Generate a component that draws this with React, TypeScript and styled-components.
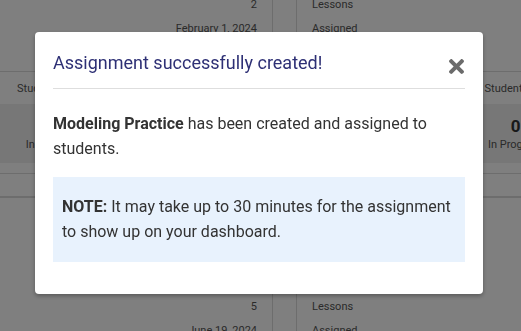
import * as React from "react"
import styled, { createGlobalStyle } from "styled-components"

const GlobalStyle = createGlobalStyle`
  html, body {
    margin: 0;
    padding: 0;
    overflow: hidden;
    background: #fff;
  }
  body {
    font-family: Roboto, "Noto Sans", "Liberation Sans", sans-serif;
  }
`

// ---- background board ----

const Board = styled.div`
  display: flex;
  flex-direction: column;
  width: 571px;
  margin: -9px 0 0 -1px;
`

const Card = styled.div`
  display: flex;
  flex-direction: column;
  background: #fff;
  border: 1px solid #dadada;
  border-bottom: none;
`

const DetailGrid = styled.div<{ $bottom?: number }>`
  display: grid;
  grid-template-columns: 273px 23px 1fr;
  padding-bottom: ${(p) => p.$bottom ?? 0}px;
`

const DetailValue = styled.div`
  display: flex;
  align-items: center;
  justify-content: flex-end;
  height: 24px;
  padding-right: 15px;
  border-right: 1px solid #dadada;
  font-size: 11px;
  color: #555;
`

const DetailGap = styled.div``

const DetailLabel = styled.div`
  display: flex;
  align-items: center;
  height: 24px;
  padding-left: 15px;
  border-left: 1px solid #dadada;
  font-size: 11px;
  color: #555;
`

const StudentHeader = styled.div`
  display: flex;
  justify-content: space-between;
  align-items: center;
  height: 32px;
  padding: 0 20px 0 17px;
  border-top: 1px solid #dadada;
  font-size: 11px;
  color: #555;
`

const StatBand = styled.div`
  display: grid;
  grid-template-columns: repeat(6, 1fr);
  height: 59px;
  padding: 11px 7px 0;
  box-sizing: border-box;
  background: #eeeeee;
`

const Stat = styled.div`
  display: flex;
  flex-direction: column;
  align-items: center;
`

const StatValue = styled.span`
  font-size: 17px;
  line-height: 22px;
  font-weight: 700;
  color: #333;
`

const StatLabel = styled.span`
  margin-top: 1px;
  font-size: 11px;
  line-height: 14px;
  color: #555;
  white-space: nowrap;
`

const Spacer = styled.div`
  height: 10px;
`

const CardFooter = styled.div`
  display: flex;
  align-items: center;
  justify-content: center;
  height: 22px;
  border-top: 1px solid #dadada;
  border-bottom: 1px solid #dadada;
  font-size: 11px;
  color: #3f51b5;
`

const CardHeading = styled.div`
  display: flex;
  align-items: center;
  justify-content: center;
  height: 96px;
  font-size: 14px;
  color: #333;
`

// ---- modal ----

const Overlay = styled.div`
  position: fixed;
  inset: 0;
  display: flex;
  justify-content: center;
  align-items: flex-start;
  padding: 32px 3px 0 0;
  box-sizing: border-box;
  background: rgba(0, 0, 0, 0.5);
`

const Modal = styled.div`
  width: 448px;
  padding: 0 18px 32px;
  box-sizing: border-box;
  background: #fff;
  border-radius: 4px;
  box-shadow: 0 2px 4px rgba(0, 0, 0, 0.3);
`

const ModalHeader = styled.div`
  display: flex;
  justify-content: space-between;
  align-items: center;
  padding: 20px 0 14px;
  border-bottom: 1px solid #dedede;
`

const ModalTitle = styled.h2`
  margin: 0;
  font-size: 18px;
  line-height: 22px;
  font-weight: 400;
  color: #2e3075;
`

const CloseButton = styled.button`
  display: flex;
  width: 15px;
  height: 15px;
  margin: 6px 1px 0 0;
  padding: 0;
  border: 0;
  background: none;
  color: #6b6b6b;
  cursor: pointer;
`

const Message = styled.p`
  margin: 22px 0 16px;
  font-size: 16px;
  line-height: 25px;
  color: #333;
`

const Note = styled.div`
  padding: 17px 9px 18px;
  background: #e8f2fd;
  font-size: 16px;
  line-height: 25px;
  color: #333;
`

const stats = ["Incomplete", "Not Started", "Submitted", "Graded", "Completed", "In Progress"]

type Detail = [string, string]

const AssignmentCard: React.FunctionComponent<{ heading?: string; details: Detail[]; full?: boolean }> = ({
  heading,
  details,
  full,
}) => {
  return (
    <Card>
      {heading && <CardHeading>{heading}</CardHeading>}
      <DetailGrid $bottom={full ? 7 : 0}>
        {details.map(([value, label]) => (
          <React.Fragment key={label}>
            <DetailValue>{value}</DetailValue>
            <DetailGap />
            <DetailLabel>{label}</DetailLabel>
          </React.Fragment>
        ))}
      </DetailGrid>
      {full && (
        <>
          <StudentHeader>
            <span>Students</span>
            <span>Student View</span>
          </StudentHeader>
          <StatBand>
            {stats.map((s) => (
              <Stat key={s}>
                <StatValue>0</StatValue>
                <StatLabel>{s}</StatLabel>
              </Stat>
            ))}
          </StatBand>
          <Spacer />
          <CardFooter>View Details</CardFooter>
        </>
      )}
    </Card>
  )
}

const CloseIcon = () => (
  <svg width="15" height="15" viewBox="0 80 352 352" fill="currentColor">
    <path d="M242.72 256l100.07-100.07c12.28-12.28 12.28-32.19 0-44.48l-22.24-22.24c-12.28-12.28-32.19-12.28-44.48 0L176 189.28 75.93 89.21c-12.28-12.28-32.19-12.28-44.48 0L9.21 111.45c-12.28 12.28-12.28 32.19 0 44.48L109.28 256 9.21 356.07c-12.28 12.28-12.28 32.19 0 44.48l22.24 22.24c12.28 12.28 32.2 12.28 44.48 0L176 322.72l100.07 100.07c12.28 12.28 32.2 12.28 44.48 0l22.24-22.24c12.28-12.28 12.28-32.19 0-44.48L242.72 256z" />
  </svg>
)

const App: React.FunctionComponent = () => {
  return (
    <>
      <GlobalStyle />
      <Board>
        <AssignmentCard
          full
          details={[
            ["2", "Lessons"],
            ["February 1, 2024", "Assigned"],
            ["February 8, 2024", "Due"],
          ]}
        />
        <AssignmentCard
          heading="Unit 4 Review"
          details={[
            ["5", "Lessons"],
            ["June 19, 2024", "Assigned"],
          ]}
        />
      </Board>

      <Overlay>
        <Modal role="dialog">
          <ModalHeader>
            <ModalTitle>Assignment successfully created!</ModalTitle>
            <CloseButton aria-label="Close">
              <CloseIcon />
            </CloseButton>
          </ModalHeader>
          <Message>
            <strong>Modeling Practice</strong> has been created and assigned to students.
          </Message>
          <Note>
            <strong>NOTE:</strong> It may take up to 30 minutes for the assignment to show up on your dashboard.
          </Note>
        </Modal>
      </Overlay>
    </>
  )
}

export default App
